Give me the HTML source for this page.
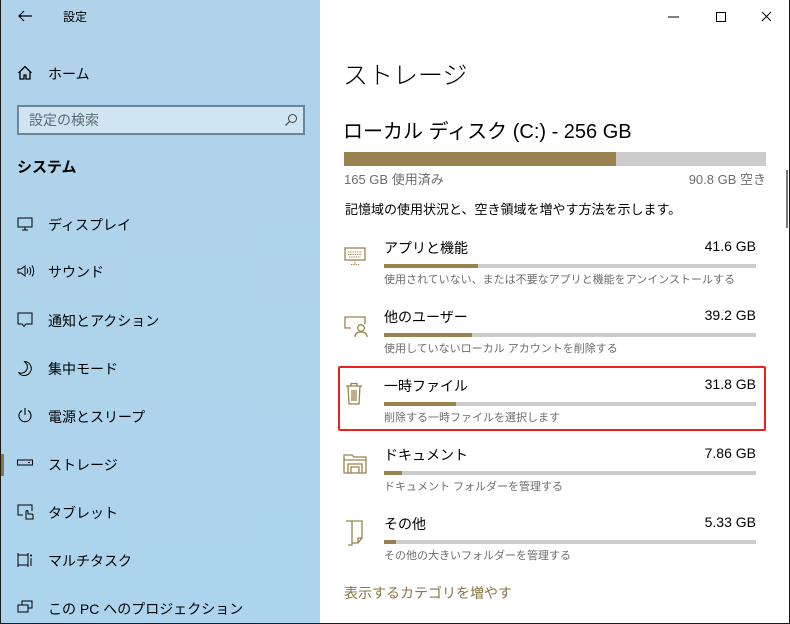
<!DOCTYPE html>
<html><head><meta charset="utf-8"><style>
*{margin:0;padding:0;box-sizing:border-box}
body{width:790px;height:624px;overflow:hidden;font-family:"Liberation Sans","Noto Sans CJK JP",sans-serif;background:#fff;position:relative}
.win{position:absolute;left:0;top:0;width:790px;height:624px;border:1px solid #1a1a1a;border-top:none}
.left{position:absolute;left:1px;top:0;width:319px;height:623px;background:linear-gradient(180deg,#b0d3eb 0%,#acd4ec 100%)}
.t{position:absolute;white-space:nowrap;color:#000}
.nav{position:absolute;left:47px;font-size:14px;color:#000}
.ic{position:absolute;left:16px}
.bar{position:absolute;background:#cccccc}
.bar i{position:absolute;left:0;top:0;bottom:0;background:#9a824f}
.gray{color:#6d6d6d}
</style></head><body>
<div class="win"></div>
<div class="left">
 <svg class="ic" style="left:16px;top:9px" width="16" height="14" viewBox="0 0 16 14"><path d="M15 7H2M7 2L2 7l5 5" fill="none" stroke="#000" stroke-width="1.2"/></svg>
 <div class="t" style="left:62px;top:8px;font-size:12px">設定</div>
 <svg class="ic" style="top:65px" width="16" height="16" viewBox="0 0 16 16"><path d="M1.5 8L8 1.5 14.5 8M3 6.5V14h4v-4h2v4h4V6.5" fill="none" stroke="#000" stroke-width="1.3"/></svg>
 <div class="nav" style="top:64px">ホーム</div>
 <div style="position:absolute;left:16px;top:105px;width:288px;height:30px;border:2px solid #6f8494;background:#cfe5f3"></div>
 <div class="t" style="left:28px;top:110px;font-size:14px;color:#5e6a73">設定の検索</div>
 <svg style="position:absolute;left:283px;top:113px" width="14" height="14" viewBox="0 0 14 14"><circle cx="8.5" cy="5.5" r="4" fill="none" stroke="#444" stroke-width="1"/><path d="M5.5 8.5L1.5 12.5" stroke="#444" stroke-width="1.2"/></svg>
 <div class="t" style="left:16px;top:156px;font-size:15px;font-weight:bold">システム</div>

 <svg class="ic" style="top:217px" width="16" height="14" viewBox="0 0 16 14"><rect x="1" y="1" width="14" height="9" fill="none" stroke="#000"/><path d="M8 10v3M5 13h6" stroke="#000"/></svg>
 <div class="nav" style="top:215px">ディスプレイ</div>
 <svg class="ic" style="top:264px" width="18" height="14" viewBox="0 0 18 14"><path d="M1 5h3l4-3v10L4 9H1z" fill="none" stroke="#000"/><path d="M10 4.5q1.5 2.5 0 5M12.5 3q2.5 4 0 8M15 1.5q3.5 5.5 0 11" fill="none" stroke="#000"/></svg>
 <div class="nav" style="top:262px">サウンド</div>
 <svg class="ic" style="top:312px" width="16" height="16" viewBox="0 0 16 16"><path d="M1 1h14v11H9l-2 2.5L5 12H1z" fill="none" stroke="#000"/></svg>
 <div class="nav" style="top:311px">通知とアクション</div>
 <svg class="ic" style="top:360px" width="16" height="16" viewBox="0 0 16 16"><path d="M7 1.5a7 7 0 1 1-5.5 11A6 6 0 0 0 7 1.5z" fill="none" stroke="#000"/></svg>
 <div class="nav" style="top:359px">集中モード</div>
 <svg class="ic" style="top:407px" width="16" height="16" viewBox="0 0 16 16"><path d="M5 3.5a6 6 0 1 0 6 0M8 1v7" fill="none" stroke="#000" stroke-width="1.1"/></svg>
 <div class="nav" style="top:407px">電源とスリープ</div>
 <div style="position:absolute;left:0;top:454px;width:3px;height:22px;background:#8b7442"></div>
 <svg class="ic" style="top:459px" width="16" height="8" viewBox="0 0 16 8"><rect x="0.5" y="1" width="15" height="5" fill="none" stroke="#000"/><path d="M11 3.5h2" stroke="#000"/></svg>
 <div class="nav" style="top:455px">ストレージ</div>
 <svg class="ic" style="top:504px" width="18" height="17" viewBox="0 0 18 17"><path d="M6 11H1V1h14v6" fill="none" stroke="#000"/><path d="M9 15V7.5a1 1 0 0 1 2 0V10h3.5a1.5 1.5 0 0 1 1.5 1.5V15z" fill="none" stroke="#000"/></svg>
 <div class="nav" style="top:503px">タブレット</div>
 <svg class="ic" style="top:552px" width="16" height="16" viewBox="0 0 16 16"><path d="M1 1v14M11 1v14M1 3h10M1 13h10M14 6v8" fill="none" stroke="#000"/><circle cx="14" cy="3.5" r="1" fill="#000"/></svg>
 <div class="nav" style="top:551px">マルチタスク</div>
 <svg class="ic" style="top:600px" width="16" height="14" viewBox="0 0 16 14"><rect x="5" y="1" width="10" height="7" fill="none" stroke="#000"/><rect x="1" y="5" width="10" height="7" fill="#aed4ec" stroke="#000"/></svg>
 <div class="nav" style="top:599px">この PC へのプロジェクション</div>
</div>

<svg style="position:absolute;left:666px;top:10px" width="112" height="14"><path d="M2 7h11" stroke="#000"/><rect x="50.5" y="2.5" width="9" height="9" fill="none" stroke="#000"/><path d="M96 2l9 9M105 2l-9 9" stroke="#000"/></svg>
<div style="position:absolute;left:786px;top:170px;width:2px;height:58px;background:#7a7a7a"></div>

<div class="t" style="left:343px;top:56px;font-size:25px;font-weight:300">ストレージ</div>
<div class="t" style="left:343px;top:115px;font-size:20px">ローカル ディスク (C:) - 256 GB</div>
<div class="bar" style="left:344px;top:152px;width:422px;height:14px"><i style="width:272px"></i></div>
<div class="t gray" style="left:344px;top:169px;font-size:13px">165 GB 使用済み</div>
<div class="t gray" style="right:24px;top:169px;font-size:13px">90.8 GB 空き</div>
<div class="t" style="left:345px;top:199px;font-size:13px">記憶域の使用状況と、空き領域を増やす方法を示します。</div>

<div style="position:absolute;left:338px;top:366px;width:428px;height:65px;border:2px solid #ee2020;border-radius:2px"></div>

<svg style="position:absolute;left:344px;top:247px" width="24" height="20" viewBox="0 0 24 20"><rect x="1" y="1" width="20" height="12" fill="none" stroke="#9a824f" stroke-width="1.3"/><path d="M4 5h14M4 7.5h14M5 10h12M11 13v4M7 17.5h8" stroke="#9a824f" stroke-dasharray="1.3 1"/></svg>
<div class="t" style="left:384px;top:238px;font-size:14px">アプリと機能</div>
<div class="t" style="right:34px;top:238px;font-size:14px">41.6 GB</div>
<div class="bar" style="left:384px;top:264px;width:372px;height:4px"><i style="width:94px"></i></div>
<div class="t gray" style="left:384px;top:271px;font-size:11px">使用されていない、または不要なアプリと機能をアンインストールする</div>

<svg style="position:absolute;left:344px;top:316px" width="26" height="22" viewBox="0 0 26 22"><path d="M7 12H1V1h20v7" fill="none" stroke="#9a824f" stroke-width="1.3"/><circle cx="17" cy="12" r="3.3" fill="none" stroke="#9a824f" stroke-width="1.3"/><path d="M11 21q0-5 6-5t6 5" fill="none" stroke="#9a824f" stroke-width="1.3"/></svg>
<div class="t" style="left:384px;top:307px;font-size:14px">他のユーザー</div>
<div class="t" style="right:34px;top:307px;font-size:14px">39.2 GB</div>
<div class="bar" style="left:384px;top:333px;width:372px;height:4px"><i style="width:88px"></i></div>
<div class="t gray" style="left:384px;top:340px;font-size:11px">使用していないローカル アカウントを削除する</div>

<svg style="position:absolute;left:345px;top:382px" width="20" height="24" viewBox="0 0 20 24"><path d="M1 4h16M6 4V1.5h6V4M3 4l1 18h10l1-18M7 8v11M9 8v11M11 8v11" fill="none" stroke="#9a824f" stroke-width="1.3"/></svg>
<div class="t" style="left:384px;top:376px;font-size:14px">一時ファイル</div>
<div class="t" style="right:34px;top:376px;font-size:14px">31.8 GB</div>
<div class="bar" style="left:384px;top:402px;width:372px;height:4px"><i style="width:72px"></i></div>
<div class="t gray" style="left:384px;top:409px;font-size:11px">削除する一時ファイルを選択します</div>

<svg style="position:absolute;left:343px;top:453px" width="26" height="22" viewBox="0 0 26 22"><path d="M1 20V2h8l2 2h12v16z M1 7h22 M5 20v-9h14v9 M8 20v-6h8v6" fill="none" stroke="#9a824f" stroke-width="1.3"/></svg>
<div class="t" style="left:384px;top:445px;font-size:14px">ドキュメント</div>
<div class="t" style="right:34px;top:445px;font-size:14px">7.86 GB</div>
<div class="bar" style="left:384px;top:471px;width:372px;height:4px"><i style="width:18px"></i></div>
<div class="t gray" style="left:384px;top:478px;font-size:11px">ドキュメント フォルダーを管理する</div>

<svg style="position:absolute;left:345px;top:520px" width="22" height="26" viewBox="0 0 22 26"><path d="M1 1h6v24H3M7 1h10v17l-4 5H7M17 18h-4v5" fill="none" stroke="#9a824f" stroke-width="1.3"/></svg>
<div class="t" style="left:384px;top:514px;font-size:14px">その他</div>
<div class="t" style="right:34px;top:514px;font-size:14px">5.33 GB</div>
<div class="bar" style="left:384px;top:540px;width:372px;height:4px"><i style="width:12px"></i></div>
<div class="t gray" style="left:384px;top:547px;font-size:11px">その他の大きいフォルダーを管理する</div>

<div class="t" style="left:344px;top:583px;font-size:14px;color:#8b7442">表示するカテゴリを増やす</div>
</body></html>
